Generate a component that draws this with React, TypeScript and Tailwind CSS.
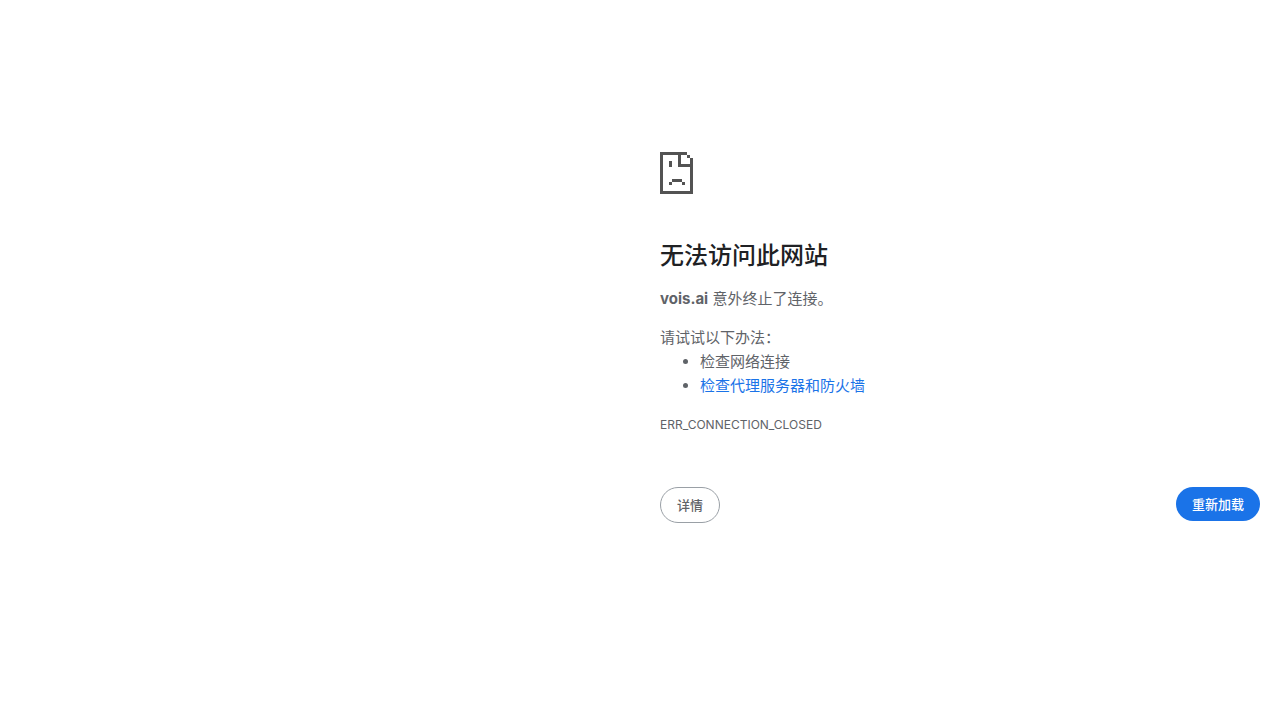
const SUGGESTIONS = [
  { text: "检查网络连接" },
  { text: "检查代理服务器和防火墙", href: "#buttons" },
];

function SadPageIcon() {
  return (
    <svg
      width="33"
      height="42"
      viewBox="0 0 33 42"
      fill="#535353"
      shapeRendering="crispEdges"
      aria-hidden="true"
    >
      {/* page outline */}
      <path d="M0 0h27v3h-6v9h9V6h3v36H0V0zm3 3v36h27V15H18V3H3z" />
      {/* corner fold */}
      <path d="M27 3h3v3h-3z" />
      {/* eye and mouth */}
      <path d="M9 9h3v6H9zM12 27h10v3H12zM9 30h3v3H9zM22 30h3v3h-3z" />
    </svg>
  );
}

export default function App() {
  return (
    <main
      lang="zh-CN"
      className="min-h-screen bg-white font-['Inter','Noto_Sans_CJK_SC',sans-serif] text-[15px] leading-6 text-[#5f6368]"
    >
      <div className="ml-auto w-1/2 px-5 pt-38">
        <SadPageIcon />

        <h1 className="mt-[46px] text-2xl leading-8 font-medium text-[#202124]">无法访问此网站</h1>
        <p className="mt-[15px]">
          <strong className="font-bold">vois.ai</strong> 意外终止了连接。
        </p>

        <div className="mt-[15px]">
          <p>请试试以下办法：</p>
          <ul className="list-disc pl-10">
            {SUGGESTIONS.map((item) => (
              <li key={item.text}>
                {item.href ? (
                  <a href={item.href} className="text-[#1a73e8]">{item.text}</a>
                ) : (
                  item.text
                )}
              </li>
            ))}
          </ul>
        </div>

        <p className="mt-[15px] text-xs leading-6">ERR_CONNECTION_CLOSED</p>

        <div id="buttons" className="mt-[50px] flex items-start justify-between">
          <button
            type="button"
            className="h-9 rounded-full border border-[#9aa0a6] px-4 text-[13px] font-medium"
          >
            详情
          </button>
          <button
            type="button"
            className="h-[34px] rounded-full bg-[#1a73e8] px-4 text-[13px] font-medium text-white"
          >
            重新加载
          </button>
        </div>
      </div>
    </main>
  );
}
